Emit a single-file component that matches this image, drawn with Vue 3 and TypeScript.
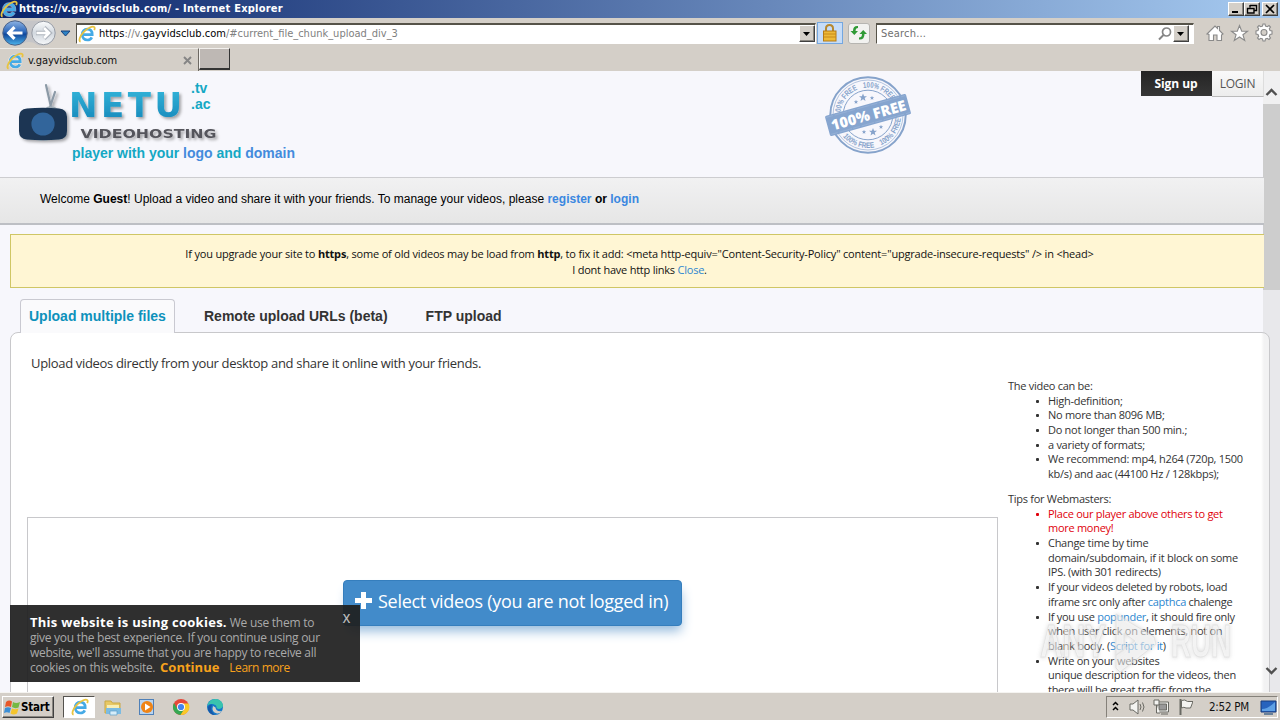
<script setup lang="ts">
interface Part { text: string; link?: boolean }
interface Item { lines: Part[][]; alert?: boolean }

const limits: Item[] = [
  { lines: [[{ text: 'High-definition;' }]] },
  { lines: [[{ text: 'No more than 8096 MB;' }]] },
  { lines: [[{ text: 'Do not longer than 500 min.;' }]] },
  { lines: [[{ text: 'a variety of formats;' }]] },
  { lines: [[{ text: 'We recommend: mp4, h264 (720p, 1500' }], [{ text: 'kb/s) and aac (44100 Hz / 128kbps);' }]] },
]

const tips: Item[] = [
  { alert: true, lines: [[{ text: 'Place our player above others to get' }], [{ text: 'more money!' }]] },
  { lines: [[{ text: 'Change time by time' }], [{ text: 'domain/subdomain, if it block on some' }], [{ text: 'IPS. (with 301 redirects)' }]] },
  { lines: [[{ text: 'If your videos deleted by robots, load' }], [{ text: 'iframe src only after ' }, { text: 'capthca', link: true }, { text: ' chalenge' }]] },
  { lines: [[{ text: 'If you use ' }, { text: 'popunder', link: true }, { text: ', it should fire only' }], [{ text: 'when user click on elements, not on' }], [{ text: 'blank body. (' }, { text: 'Script for it', link: true }, { text: ')' }]] },
  { lines: [[{ text: 'Write on your websites' }], [{ text: 'unique description for the videos, then' }], [{ text: 'there will be great traffic from the' }]] },
]

const groups = [
  { title: 'The video can be:', items: limits },
  { title: 'Tips for Webmasters:', items: tips },
]
</script>

<template>
  <div class="screen">
    <svg class="defs" width="0" height="0">
      <defs>
        <symbol id="ie" viewBox="0 0 18 18">
          <path d="M4.4 9.6H14.2C14.2 6.2 12.2 4.2 9.3 4.2C6.3 4.2 4.2 6.4 4.2 9.6C4.2 12.8 6.4 15 9.4 15C11.5 15 13 14 13.8 12.4" fill="none" stroke="#fff" stroke-opacity=".55" stroke-width="4" />
          <path d="M4.4 9.7H14.2C14.2 6.2 12.2 4.2 9.3 4.2C6.3 4.2 4.2 6.4 4.2 9.6C4.2 12.8 6.4 15 9.4 15C11.5 15 13 14 13.8 12.4" fill="none" stroke="#45aae6" stroke-width="2.7" />
          <path d="M2.6 16.6C.3 16.1 1.7 11.4 5.6 7.2C9.5 3 14.6.6 16.3 2.1C17 2.8 16.7 4 16.2 5.2" fill="none" stroke="#e9c440" stroke-width="1.8" />
        </symbol>
      </defs>
    </svg>

    <header class="titlebar">
      <svg class="ie-title"><use href="#ie" /></svg>
      <span class="title-text">https://v.gayvidsclub.com/ - Internet Explorer</span>
      <div class="win-buttons">
        <button class="raised"><svg width="14" height="12"><path d="M3 9H9" stroke="#000" stroke-width="2" /></svg></button>
        <button class="raised"><svg width="14" height="12"><path d="M5 2.5H11.5V7.5H9.5M5 2V4.5M5 2.5H12M2.5 5.5H9V10H2.5Z" fill="none" stroke="#000" stroke-width="1.4" /></svg></button>
        <button class="raised gap"><svg width="14" height="12"><path d="M3 2L11 10M11 2L3 10" stroke="#000" stroke-width="1.7" /></svg></button>
      </div>
    </header>

    <div class="toolbar">
      <svg class="nav" width="74" height="30" viewBox="0 0 74 30">
        <defs>
          <linearGradient id="back" x1="0" y1="0" x2="0" y2="1"><stop offset="0" stop-color="#8fb4e4" /><stop offset=".45" stop-color="#2d68bb" /><stop offset=".55" stop-color="#10479b" /><stop offset="1" stop-color="#4db5ec" /></linearGradient>
          <linearGradient id="fwd" x1="0" y1="0" x2="0" y2="1"><stop offset="0" stop-color="#fbfcfd" /><stop offset=".5" stop-color="#d2d8df" /><stop offset="1" stop-color="#f5f7f9" /></linearGradient>
        </defs>
        <path d="M15 2.5H43A12.5 12.5 0 0 1 43 27.500C35 28 36 24 29 24S23 28 15 27.500Z" fill="#c5c5c8" />
        <circle cx="15" cy="15" r="12.200" fill="url(#back)" stroke="#4c6287" stroke-width="1" />
        <path d="M22.500 15H9M14.500 9.200L8.700 15L14.500 20.800" fill="none" stroke="#fff" stroke-width="3.200" />
        <circle cx="43.500" cy="15" r="11.700" fill="url(#fwd)" stroke="#979ca5" stroke-width="1" />
        <path d="M36 15H49M44 9.500L49.500 15L44 20.500" fill="none" stroke="#aeb4bd" stroke-width="4.400" />
        <path d="M36.500 15H49M44 10L49 15L44 20" fill="none" stroke="#fff" stroke-width="2.700" />
        <path d="M61 13H70L65.500 18Z" fill="#2d83c5" stroke="#173f7b" stroke-width="1" />
      </svg>
      <div class="field address">
        <svg class="ie-icon"><use href="#ie" /></svg>
        <span class="url">https<i>://v.</i>gayvidsclub.com<i>/#current_file_chunk_upload_div_3</i></span>
        <button class="raised drop"><svg width="10" height="8"><path d="M1 2H8L4.500 6Z" /></svg></button>
      </div>
      <div class="lock">
        <svg width="24" height="20" viewBox="0 0 24 20"><path d="M8 9V5.500Q8 2 11.500 2T15 5.500V9" fill="none" stroke="#b6882f" stroke-width="2" /><rect x="5.500" y="8" width="12.500" height="10" fill="#edb936" stroke="#b57b14" /><path d="M6 11H18M6 14H18" stroke="#c88916" /></svg>
      </div>
      <div class="refresh">
        <svg width="20" height="18" viewBox="0 0 20 18" fill="#2f9a35"><path d="M9 2Q4 1.500 4 7H1.500L5.300 11L9 7H6.600Q6.500 4 9 4Z" /><path d="M10 15.500Q15.500 16 15.500 10H18L14.200 6L10.500 10H13Q13 13.500 10 13.500Z" /></svg>
      </div>
      <div class="field search">
        <span class="placeholder">Search...</span>
        <svg width="16" height="16"><circle cx="9.500" cy="6" r="4" fill="none" stroke="#858585" stroke-width="1.700" /><path d="M6.500 9L2 13.500" stroke="#858585" stroke-width="2" /></svg>
        <button class="raised drop"><svg width="10" height="8"><path d="M1 2H8L4.500 6Z" /></svg></button>
      </div>
      <svg class="tools" width="70" height="22" viewBox="0 0 70 22" fill="#fff" stroke="#8a8a8a" stroke-width="1.100">
        <path d="M2 12L10 4L12.500 6.500V4.500H14.500V8.500L18 12L16.500 13V18.500H12V13H8.500V18.500H4V12.500Z" />
        <path d="M34.500 3.500L36.700 9.200H42.500L37.900 12.700L39.700 18.500L34.500 15L29.300 18.500L31.100 12.700L26.500 9.200H32.300Z" />
        <path d="M57.500 4L58 2H60L60.500 4L62.300 4.700L64 3.500L65.500 5L64.300 6.700L65 8.500L67 9V12L65 12.500L64.300 14.300L65.500 16L64 17.500L62.300 16.300L60.500 17L60 19H58L57.500 17L55.700 16.300L54 17.500L52.500 16L53.700 14.300L53 12.500L51 12V9L53 8.500L53.700 6.700L52.500 5L54 3.500L55.700 4.700Z" />
        <circle cx="59" cy="10.500" r="3" fill="#d4cfc8" />
      </svg>
    </div>

    <nav class="tabstrip">
      <div class="browser-tab">
        <svg class="ie-icon"><use href="#ie" /></svg>
        <span class="tab-name">v.gayvidsclub.com</span>
        <svg width="9" height="9"><path d="M1 1L8 8M8 1L1 8" stroke="#858585" stroke-width="1.900" /></svg>
      </div>
      <div class="new-tab" />
    </nav>

    <div class="page">
      <div class="scrollbar">
        <div class="up"><svg width="15" height="10"><path d="M2.500 8L7.500 3L12.500 8" fill="none" stroke="#505050" stroke-width="2.400" /></svg></div>
        <div class="thumb" />
        <svg class="down" width="15" height="10"><path d="M2.500 2L7.500 7L12.500 2" fill="none" stroke="#505050" stroke-width="2.400" /></svg>
      </div>
      <main>
        <section class="masthead">
          <svg class="logo" width="320" height="107" viewBox="0 70 320 107">
            <defs>
              <linearGradient id="netu" x1="0" y1="0" x2="0" y2="1"><stop offset="0" stop-color="#36b9dc" /><stop offset="1" stop-color="#1585b9" /></linearGradient>
              <filter id="soft" x="-20%" y="-20%" width="150%" height="150%"><feDropShadow dx="2" dy="2" stdDeviation="1.600" flood-color="#000" flood-opacity=".35" /></filter>
            </defs>
            <g filter="url(#soft)">
              <path d="M46 85L51 107M55 92L50 107" fill="none" stroke="#8b99a6" stroke-width="2.200" stroke-linecap="round" />
              <path d="M44 109Q51 103 58 109Z" fill="#9eabb5" />
              <path d="M27 108.500Q43 107 59 108.500Q67 109 67 117V131Q67 139 59 139.500Q43 141 27 139.500Q19 139 19 131V117Q19 109 27 108.500Z" fill="#1b3653" />
              <circle cx="43" cy="124" r="11.600" fill="#32659b" />
              <text class="brand" x="69" y="116.500" textLength="113" lengthAdjust="spacing" fill="url(#netu)">NETU</text>
              <text class="hosting" x="80.500" y="137.500" textLength="136" lengthAdjust="spacingAndGlyphs">VIDEOHOSTING</text>
            </g>
            <g class="logo-copy">
              <text x="191" y="93">.tv</text>
              <text x="191" y="109">.ac</text>
              <text x="72" y="158" textLength="223">player with your <tspan class="accent">logo</tspan> and <tspan class="accent">domain</tspan></text>
            </g>
          </svg>
          <svg class="stamp" width="92" height="86" viewBox="-46 -44 92 86">
            <defs>
              <path id="arcTop" d="M-27.500 0A27.500 27.500 0 0 1 27.500 0" />
              <path id="arcBottom" d="M-33 0A33 33 0 0 0 33 0" />
            </defs>
            <g fill="none" stroke="#86a3cb"><circle r="37.700" stroke-width="2" /><circle r="35" stroke-width=".6" /><circle r="24.800" stroke-width="1" /></g>
            <g class="stamp-ring" transform="rotate(-16)">
              <text><textPath href="#arcTop" startOffset="7" textLength="33" lengthAdjust="spacingAndGlyphs">100% FREE</textPath></text>
              <text><textPath href="#arcTop" startOffset="46" textLength="33" lengthAdjust="spacingAndGlyphs">100% FREE</textPath></text>
              <text><textPath href="#arcBottom" startOffset="14" textLength="35" lengthAdjust="spacingAndGlyphs">100% FREE</textPath></text>
              <text><textPath href="#arcBottom" startOffset="56" textLength="35" lengthAdjust="spacingAndGlyphs">100% FREE</textPath></text>
            </g>
            <g fill="#86a3cb">
              <path v-for="(s, i) in [[-12, -13, 0.55], [-5, -17.5, 1], [4, -17, 0.55], [-4, 17, 0.55], [5, 17, 1], [13, 12, 0.55]]" :key="i" :transform="`translate(${s[0]} ${s[1]}) scale(${s[2]})`" d="M0 -4L1.100 -1.300L4 -1.200L1.700.6L2.500 3.400L0 1.800L-2.500 3.400L-1.700.6L-4 -1.200L-1.100 -1.300Z" />
            </g>
            <g transform="rotate(-15.500)">
              <rect x="-42" y="-10.500" width="84" height="21" rx="1.500" fill="#86a5cf" />
              <path d="M-41 -8.800H41M-41 8.800H41" stroke="#9db6d9" stroke-width=".6" stroke-dasharray="7 2 13 1" />
              <text class="free" x="-38" y="5.500" textLength="77">100% FREE</text>
            </g>
          </svg>
          <div class="account"><a class="signup"><span>Sign up</span></a><a class="login"><span>LOGIN</span></a></div>
        </section>

        <section class="welcome"><span class="welcome-text">Welcome <b>Guest</b>! Upload a video and share it with your friends. To manage your videos, please <b><a>register</a> or <a>login</a></b></span></section>

        <section class="notice">
          <p class="notice-main">If you upgrade your site to <b>https</b>, some of old videos may be load from <b>http</b>, to fix it add: &lt;meta http-equiv="Content-Security-Policy" content="upgrade-insecure-requests" /&gt; in &lt;head&gt;</p>
          <p class="notice-sub">I dont have http links <a>Close</a>.</p>
        </section>

        <nav class="page-tabs">
          <a class="current"><span>Upload multiple files</span></a><a class="remote">Remote upload URLs (beta)</a><a>FTP upload</a>
        </nav>

        <section class="panel">
          <div class="upload">
            <p class="intro">Upload videos directly from your desktop and share it online with your friends.</p>
            <div class="dropzone">
              <button class="select"><svg width="17" height="17"><path d="M8.500 0V17M0 8.500H17" stroke="#fff" stroke-width="5" /></svg><span>Select videos (you are not logged in)</span></button>
            </div>
          </div>
          <aside>
            <div v-for="group in groups" :key="group.title" class="group">
              <div>{{ group.title }}</div>
              <ul>
                <li v-for="(item, i) in group.items" :key="i" :class="{ alert: item.alert }">
                  <div v-for="(line, j) in item.lines" :key="j" class="line"><span v-for="(part, k) in line" :key="k" :class="{ link: part.link }">{{ part.text }}</span></div>
                </li>
              </ul>
            </div>
          </aside>
        </section>
      </main>

      <div class="cookies">
        <div><b>This website is using cookies.</b> <span class="c1">We use them to</span></div>
        <div class="c2">give you the best experience. If you continue using our</div>
        <div class="c3">website, we'll assume that you are happy to receive all</div>
        <div><span class="c4">cookies on this website.</span> <b class="continue">Continue</b> <a>Learn more</a></div>
        <span class="close">X</span>
      </div>

      <svg class="watermark" width="204" height="68" viewBox="0 0 204 68">
        <text x="4" y="49" textLength="66" lengthAdjust="spacingAndGlyphs">ANY</text>
        <path d="M80 6L118 29L120 36L84 64L80 60V47L99 33L88 25V42L80 47Z" />
        <text x="135" y="49" textLength="60" lengthAdjust="spacingAndGlyphs">RUN</text>
      </svg>
    </div>

    <footer class="taskbar">
      <button class="raised start">
        <svg width="17" height="17" viewBox="0 0 17 17"><path d="M2 3Q5 .5 8 2.500L7 8Q4 6.500 1 8Z" fill="#e8582a" /><path d="M9 3Q12 5 16 3L14.500 8.500Q11 10 8 8Z" fill="#75b944" /><path d="M1 9Q4 7.500 7 9L5.500 14Q3 12.500 0 14Z" fill="#3c8fd6" /><path d="M8 9.500Q11 11 14.500 9.500L13 14.500Q9.500 16.500 6.500 14.500Z" fill="#f5c52c" /></svg>
        <span>Start</span>
      </button>
      <div class="active-app"><svg class="ie-icon"><use href="#ie" /></svg></div>
      <div class="apps">
        <svg width="18" height="18" viewBox="0 0 18 18"><path d="M1 3H7L8.500 5H16V15H1Z" fill="#e7c866" stroke="#c9a744" /><path d="M3 7H15V11H3Z" fill="#f8eeb5" /><path d="M2 10H17V16H2Z" fill="#7bbbe2" /><path d="M6 13H13V17H6Z" fill="#d6edf9" stroke="#5d9ec7" stroke-width=".7" /></svg>
        <svg width="18" height="18" viewBox="0 0 18 18"><rect x="1.500" y="1.500" width="14" height="15" fill="#b9d4ef" stroke="#4f80b8" /><circle cx="9" cy="9" r="6" fill="#ef8416" /><path d="M7 5.500L12.500 9L7 12.500Z" fill="#fff" /></svg>
        <svg width="18" height="18" viewBox="0 0 18 18"><circle cx="9" cy="9" r="8" fill="#e6483a" /><path d="M2 5A8 8 0 0 0 8.500 17L12.500 11H5.500Z" fill="#35a853" /><path d="M16.500 5.500A8 8 0 0 1 8.500 17L12.700 10.500L11 5.500Z" fill="#f9c928" /><circle cx="9" cy="9" r="4" fill="#fff" /><circle cx="9" cy="9" r="3.100" fill="#4384ee" /></svg>
        <svg width="18" height="18" viewBox="0 0 18 18"><circle cx="9" cy="9" r="8" fill="#1478c9" /><path d="M1.200 8Q3 1 9.500 1C14 1 17 4.500 17 7.500C17 11 11 12 10.500 9.500C11.500 6.500 4 4 1.200 8Z" fill="#39c3ae" /><path d="M7 8Q5 14 11 15.500Q14 16 16 13Q10 14 9.500 9.500Z" fill="#d4cfc8" /><path d="M2 12Q1 7 6 6.500Q3.500 13 9 17Q4 17 2 12Z" fill="#1758a7" /></svg>
      </div>
      <div class="tray">
        <svg width="86" height="22" viewBox="0 0 86 22">
          <path d="M6 9L8.500 6.500L11 9M6 14L8.500 11.500L11 14" fill="none" stroke="#000" stroke-width="1.500" />
          <g fill="#f4f4f1" stroke="#696963" stroke-width="1"><path d="M23 8H26L31 4V18L26 14H23Z" /><path d="M33 8Q35 11 33 14M35.500 6.500Q38.500 11 35.500 15.500" fill="none" /><path d="M50 6H61.500V16H50Z" /><path d="M52 8H59.500V14H52Z" fill="#999" /><path d="M47 4V9H52V4ZM49.500 9V17H53M54 18H61" /><path d="M73.500 3V19" stroke-width="2" /><path d="M74.500 4.500Q78 3 80.500 5.500H86L83.500 12H79Q77 10.500 74.500 12Z" /></g>
        </svg>
        <span class="clock">2:52 PM</span>
        <svg class="desktop" width="17" height="15"><path d="M1 1H16V12H1Z" fill="#2763bd" stroke="#183d7d" /><path d="M2 9Q8 9 15 2V11H2Z" fill="#5fa1e5" /><path d="M4 14H13" stroke="#688099" stroke-width="2" /></svg>
      </div>
    </footer>
  </div>
</template>

<style>
body { margin: 0; overflow: hidden; }
</style>

<style scoped>
* { box-sizing: border-box; }
.screen { width: 1280px; height: 720px; overflow: hidden; display: flex; flex-direction: column; background: #d4cfc8; font: 11px/14px "Open Sans", "Noto Sans", sans-serif; color: #111; white-space: nowrap; }
svg { display: block; flex: none; }
.defs { position: absolute; }
button { padding: 0; margin: 0; border: 0; font: inherit; }
p { margin: 0; }
a { color: #2d87d0; }
.raised { display: grid; place-items: center; background: #d4cfc8; border: 1px solid; border-color: #fff #404040 #404040 #fff; box-shadow: inset -1px -1px #8a8781; }
.ie-icon { width: 18px; height: 18px; }

.titlebar { height: 18px; display: flex; align-items: center; background: linear-gradient(90deg, #0a246a, #a6caf0); font: bold 11px/16px "DejaVu Sans Condensed", "DejaVu Sans", sans-serif; color: #fff; }
.ie-title { width: 18px; height: 18px; }
.title-text { letter-spacing: .23px; margin-left: 1px; }
.win-buttons { display: flex; margin-left: auto; padding-right: 2px; }
.win-buttons .raised { width: 16px; height: 14px; }
.win-buttons .gap { margin-left: 2px; }

.toolbar { height: 30px; display: flex; align-items: center; font-family: "DejaVu Sans Condensed", "DejaVu Sans", sans-serif; }
.nav { margin-right: 2px; }
.field { height: 21px; display: flex; align-items: center; background: #fff; border: 1px solid #777; border-top: 2px solid #565349; border-color: #565349 #fff #fff #565349; }
.address { width: 740px; padding-left: 1px; }
.url { margin-left: 3px; letter-spacing: 0; color: #000; }
.url i { font-style: normal; color: #808080; }
.drop { width: 16px; height: 17px; margin-left: auto; }
.lock { width: 26px; height: 22px; margin-left: 1px; border: 1px solid #74a7e0; background: #c6dcf7; display: grid; place-items: center; }
.refresh { width: 22px; height: 21px; margin: 0 6px 0 5px; border: 1px solid #b6b5b1; border-radius: 3px; background: #f2f2f0; display: grid; place-items: center; }
.search { width: 318px; padding: 0 4px 0 4px; }
.placeholder { color: #707070; margin-right: auto; letter-spacing: .2px; }
.search .drop { margin-left: 0; }
.tools { margin-left: 11px; }

.tabstrip { height: 23px; display: flex; font-family: "DejaVu Sans Condensed", "DejaVu Sans", sans-serif; }
.browser-tab { width: 199px; display: flex; align-items: center; padding: 2px 6px 0 6px; border-top: 1px solid #eeece8; border-right: 1px solid #6d6963; }
.tab-name { margin: 0 auto 0 4px; letter-spacing: -.15px; }
.new-tab { width: 31px; height: 22px; background: #beb8b4; border: 1px solid #f2f0ed; border-right-color: #333; border-bottom: 2px solid #333; }

.page { position: relative; height: 622px; overflow: hidden; background: #f7f7fc; }
.scrollbar { position: absolute; top: 0; right: 0; width: 17px; height: 622px; background: #e8e8eb; }
.up { height: 33px; padding: 16px 0 0 1px; background: #f0f0f1; }
.thumb { height: 186px; background: #cdcdcd; }
.down { position: absolute; z-index: 2; left: 1px; bottom: 17px; }
main { position: relative; }

.masthead { height: 106px; display: flex; width: 1264px; }
.logo { height: 107px; margin-top: -1px; }
.brand { font: bold 34px "DejaVu Sans", sans-serif; }
.hosting { font: bold 12.500px "DejaVu Sans", sans-serif; fill: #54545b; }
.logo-copy { font: bold 14px "Liberation Sans", sans-serif; fill: #14a8c4; }
.accent { fill: #438bdc; }
.stamp { margin: 0 auto 0 502px; }
.stamp-ring { font: bold 8px "Liberation Sans", sans-serif; fill: #86a3cb; }
.free { font: 800 14.500px "Open Sans", sans-serif; fill: #fff; }
.account { display: flex; font-size: 12px; line-height: 25px; text-align: center; }
.signup { width: 71px; height: 25px; color: #fff; font-weight: bold; background: linear-gradient(#242424, #363636); letter-spacing: -.05px; padding-right: 1px; }
.login { width: 52px; height: 26px; color: #555; background: linear-gradient(#f9f9f9, #ededed); border-bottom: 1px solid #bbb; border-right: 1px solid #ddd; letter-spacing: -.25px; }

.welcome { width: 1264px; height: 48px; padding-left: 40px; border-top: 1px solid #cdcdd0; border-bottom: 2px solid #bdbfc4; background: linear-gradient(#f1f1f2, #e6e6e6); font: 12px/42px "Liberation Sans", sans-serif; letter-spacing: .01px; color: #000; }
.welcome a { color: #3a87e0; }
.notice { width: 1254px; height: 54px; margin: 9px 0 0 10px; padding: 11px 0 0; display: flex; flex-direction: column; align-items: center; border: 1px solid #cfc665; border-right: 0; background: #fff6d4; line-height: 16px; }
.notice-main { letter-spacing: -.187px; position: relative; left: 2px; }
.notice-sub { letter-spacing: -.23px; position: relative; left: 2px; }

.page-tabs { display: flex; height: 34px; padding-left: 20px; margin-top: 11px; font: bold 14px/35px "Liberation Sans", sans-serif; color: #333; }
.page-tabs a { color: #333; margin-right: 38px; }
.page-tabs .current { position: relative; width: 155px; height: 34px; line-height: 33px; margin-right: 29px; color: #0d91bb; padding-left: 8px; border: 1px solid #c9c9d1; border-bottom: 0; border-radius: 4px 4px 0 0; background: #fafafc; z-index: 1; }

.panel { display: flex; width: 1260px; height: 420px; margin: -1px 0 0 10px; border: 1px solid #c8c8cb; border-radius: 8px 8px 0 0; background: linear-gradient(90deg, #fff 1250px, #f2f2f3 1253px); color: #333; }
.upload { width: 987px; padding: 20px 0 0 16px; }
.intro { margin-left: 4px; font-size: 13px; line-height: 20px; letter-spacing: -.325px; }
.dropzone { width: 971px; height: 300px; margin-top: 144px; border: 1px solid #c8c8cb; padding: 62px 0 0 315px; }
.select { display: flex; align-items: center; width: 339px; height: 46px; padding: 0 0 4px 11px; border: 1px solid #357ebd; border-radius: 4px; background: #428bca; color: #fff; font-size: 18px; letter-spacing: -.28px; box-shadow: 2px 8px 12px -3px #93b9dc; }
.select span { margin-left: 6px; }
aside { padding: 46px 0 0 10px; line-height: 14.700px; letter-spacing: -.28px; }
.group { margin-bottom: 10px; }
ul { margin: 0; padding-left: 40px; list-style: none; }
li { position: relative; }
li::before { content: ""; position: absolute; left: -12px; top: 6px; width: 3px; height: 3px; border-radius: 1px; background: currentColor; }
.line { white-space: pre; }
.alert { color: #e0000b; }
.link { color: #2d87d0; }

.cookies { position: absolute; left: 10px; top: 534px; width: 350px; height: 77px; padding: 10px 20px; background: rgba(31, 31, 31, .93); color: #aaa; font-size: 12px; line-height: 15px; letter-spacing: -.27px; }
.cookies b { color: #fff; font-size: 13px; letter-spacing: .02px; }
.cookies .continue { color: #f7a21c; margin: 0 7px 0 2px; }
.cookies a { color: #f7a21c; letter-spacing: -.45px; }
.c1 { letter-spacing: -.25px; margin-left: 0; }
.cookies div:first-child b { letter-spacing: .27px; }
.c3 { letter-spacing: -.3px; }
.c4 { letter-spacing: -.31px; }
.close { position: absolute; right: 10px; top: 6px; color: #bbb; font-weight: 600; }
.watermark { position: absolute; z-index: 1; left: 1036px; top: 537px; fill: rgba(255, 255, 255, .5); stroke: #dcdcdc; stroke-width: 1; filter: drop-shadow(0 0 2px #bbb); font: bold 47px "Liberation Sans", sans-serif; opacity: .8; }

.taskbar { height: 28px; display: flex; align-items: center; border-top: 1px solid #f5f4f1; padding-top: 1px; background: #d4cfc8; font-family: "DejaVu Sans Condensed", "DejaVu Sans", sans-serif; }
.start { display: flex; align-items: center; width: 52px; height: 22px; margin-left: 2px; padding-left: 1px; font-weight: bold; font-size: 11.500px; letter-spacing: -.2px; }
.active-app { width: 32px; height: 22px; margin-left: 9px; background: #fff; border: 1px solid #55534f; border-right-color: #fff; border-bottom-color: #fff; padding: 1px 0 0 7px; }
.apps { display: flex; gap: 16px; margin-left: 9px; }
.tray { width: 172px; height: 22px; margin: 0 2px 0 auto; display: flex; align-items: center; border: 1px solid; border-color: #85817a #fff #fff #85817a; }
.clock { margin-left: 16px; letter-spacing: -.25px; font-size: 11.500px; }
.desktop { margin: 0 0 0 auto; }
</style>
